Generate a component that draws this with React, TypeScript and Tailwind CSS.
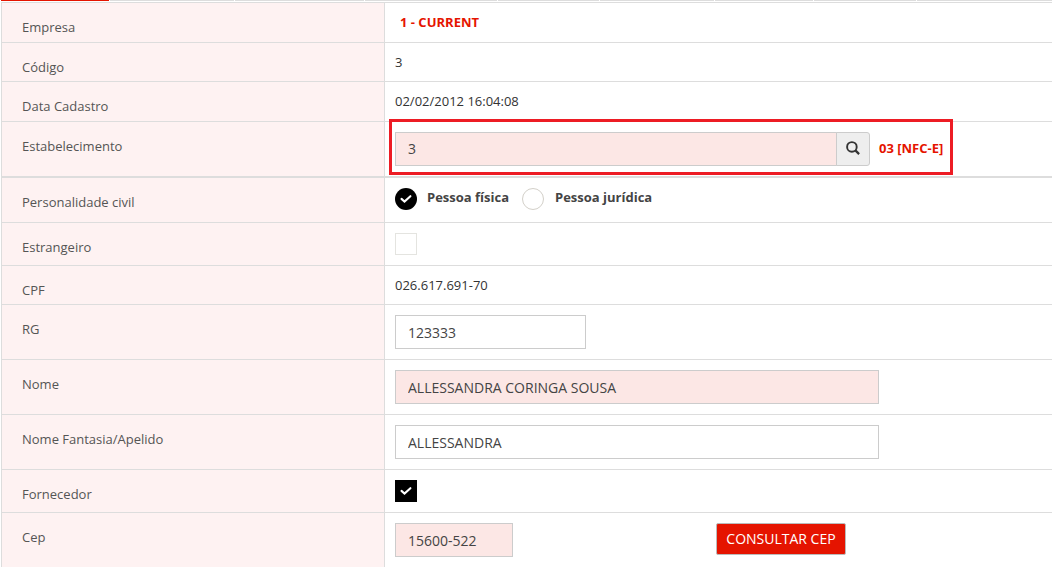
import type { ReactNode } from "react";
import clsx from "clsx";

const TABS = [
  "w-[108px] bg-[#e51400]",
  "w-[124px] bg-[#dddddd]",
  "w-[129px] bg-[#dddddd]",
  "w-[132px] bg-[#dddddd]",
  "w-[101px] bg-[#dddddd]",
  "w-[114px] bg-[#dddddd]",
  "w-[98px] bg-[#dddddd]",
  "w-[102px] bg-[#dddddd]",
  "flex-1 bg-[#dddddd]",
];

function Row({
  label,
  height,
  thick = false,
  children,
}: {
  label: string;
  height: string;
  thick?: boolean;
  children: ReactNode;
}) {
  return (
    <div
      className={clsx(
        "flex shrink-0 border-[#dddddd]",
        thick ? "border-b-2" : "border-b",
        height
      )}
    >
      <div className="w-[383px] shrink-0 border-r border-[#dddddd] bg-[#fef2f2] pt-3.5 pl-5 text-[#555555]">
        {label}
      </div>
      <div className="relative flex-1 pt-2.5 pl-2.5">{children}</div>
    </div>
  );
}

function Value({ children }: { children: ReactNode }) {
  return <div className="-mt-px">{children}</div>;
}

function TextInput({
  value,
  width,
  required = false,
  padding = "px-3",
}: {
  value: string;
  width: string;
  required?: boolean;
  padding?: string;
}) {
  return (
    <input
      type="text"
      defaultValue={value}
      className={clsx(
        "block h-[34px] border border-[#cccccc] text-sm text-[#444444] outline-none",
        required ? "bg-[#fce7e5]" : "bg-white",
        padding,
        width
      )}
    />
  );
}

function CheckMark({ className }: { className?: string }) {
  return (
    <svg width="22" height="22" viewBox="0 0 22 22" fill="none" className={className}>
      <path
        d="M6.5 10.9 9.5 13.5 15.4 8.2"
        stroke="#fff"
        strokeWidth="2.1"
        strokeLinecap="round"
      />
    </svg>
  );
}

function Checkbox({ checked = false }: { checked?: boolean }) {
  return (
    <span
      role="checkbox"
      aria-checked={checked}
      className={clsx(
        "block size-[22px]",
        checked ? "bg-black" : "border border-[#e4e4e0] bg-white"
      )}
    >
      {checked && <CheckMark />}
    </span>
  );
}

function Radio({ label, checked = false }: { label: string; checked?: boolean }) {
  return (
    <label className="flex items-start">
      <span
        className={clsx(
          "block size-[22px] rounded-full",
          checked ? "mr-2.5 bg-black" : "mr-[11px] border border-[#d3d0c9] bg-white"
        )}
      >
        {checked && <CheckMark />}
      </span>
      <span className="-mt-px font-bold text-[#444444]">{label}</span>
    </label>
  );
}

export default function App() {
  return (
    <div className="flex h-[567px] w-[1052px] flex-col overflow-hidden bg-white font-['Open_Sans',sans-serif] text-[13px] leading-5 text-[#333333]">
      <div className="mb-px flex h-px shrink-0 gap-px pl-px">
        {TABS.map((tab, i) => (
          <div key={i} className={clsx("h-px", tab)} />
        ))}
      </div>

      <div className="ml-px flex flex-col border-t border-l border-[#dddddd]">
        <Row label="Empresa" height="h-10">
          <Value>
            <span className="ml-[5px] font-bold text-[#e51400]">1 - CURRENT</span>
          </Value>
        </Row>
        <Row label="Código" height="h-[39px]">
          <Value>3</Value>
        </Row>
        <Row label="Data Cadastro" height="h-10">
          <Value>02/02/2012 16:04:08</Value>
        </Row>
        <Row label="Estabelecimento" height="h-14" thick>
          <div className="flex">
            <TextInput value="3" width="w-[442px]" padding="px-3 pb-0.5" required />
            <button className="-ml-px flex h-[34px] w-[34px] items-center justify-center rounded-r-[3px] border border-[#cccccc] bg-[#eeeeee]">
              <svg width="14" height="14" viewBox="0 0 14 14" fill="none" className="mb-[3px]">
                <circle cx="5.9" cy="5.9" r="4.8" stroke="#333" strokeWidth="1.9" />
                <path d="m9.4 9.4 3.7 3.7" stroke="#333" strokeWidth="2.3" />
              </svg>
            </button>
            <span className="mt-1.5 ml-[9px] font-bold text-[#e51400]">03 [NFC-E]</span>
          </div>
          {/* highlight around the field */}
          <div className="pointer-events-none absolute -top-[3px] left-1 h-14 w-[564px] border-[3px] border-[#ed1c24]" />
        </Row>
        <Row label="Personalidade civil" height="h-[45px]">
          <div className="flex gap-[13px]">
            <Radio label="Pessoa física" checked />
            <Radio label="Pessoa jurídica" />
          </div>
        </Row>
        <Row label="Estrangeiro" height="h-[43px]">
          <Checkbox />
        </Row>
        <Row label="CPF" height="h-[39px]">
          <Value>026.617.691-70</Value>
        </Row>
        <Row label="RG" height="h-[55px]">
          <TextInput value="123333" width="w-[191px]" />
        </Row>
        <Row label="Nome" height="h-[55px]">
          <TextInput value="ALLESSANDRA CORINGA SOUSA" width="w-[484px]" required />
        </Row>
        <Row label="Nome Fantasia/Apelido" height="h-[55px]">
          <TextInput value="ALLESSANDRA" width="w-[484px]" />
        </Row>
        <Row label="Fornecedor" height="h-[43px]">
          <Checkbox checked />
        </Row>
        <Row label="Cep" height="h-[55px]">
          <div className="flex items-start">
            <TextInput value="15600-522" width="w-[118px]" required />
            <button className="ml-[203px] h-8 w-[130px] rounded-[2px] border border-[#bbbbbb] bg-[#e51400] text-sm text-white">
              CONSULTAR CEP
            </button>
          </div>
        </Row>
      </div>
    </div>
  );
}
